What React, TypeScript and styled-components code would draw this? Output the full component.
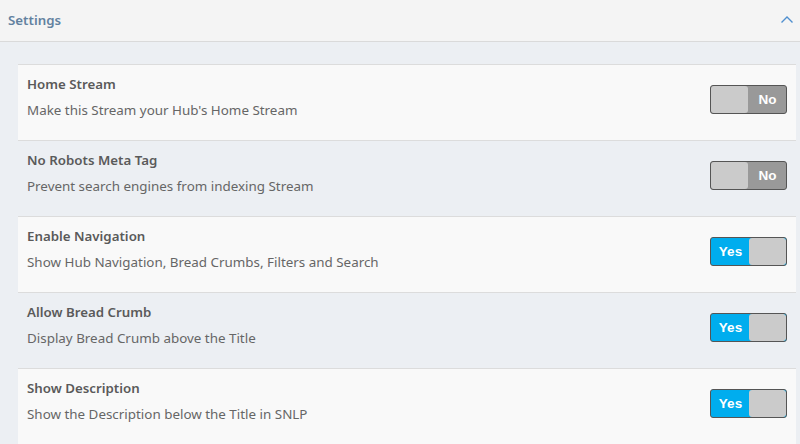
import React from "react";
import styled, { createGlobalStyle } from "styled-components";

const Global = createGlobalStyle`
  html, body { margin: 0; padding: 0; background: #eceff3; }
  body { font-family: "Noto Sans", "Open Sans", sans-serif; }
`;

const Panel = styled.div`
  width: 800px;
  height: 444px;
  overflow: hidden;
  background: #eceff3;
`;

const Header = styled.div`
  height: 42px;
  box-sizing: border-box;
  display: flex;
  align-items: center;
  justify-content: space-between;
  padding: 0 6px 1px 8px;
  background: #f4f4f4;
  border-bottom: 1px solid #dadada;
`;

const HeaderTitle = styled.span`
  font-size: 13.3px;
  font-weight: 600;
  color: #62819f;
`;

const Body = styled.div`
  padding: 22px 4px 0 18px;
`;

const List = styled.div`
  display: flex;
  flex-direction: column;
`;

const Row = styled.div<{ $alt: boolean }>`
  height: 76px;
  box-sizing: border-box;
  border-top: 1px solid #dcdcdc;
  background: ${(p) => (p.$alt ? "transparent" : "#f9f9f9")};
  display: flex;
  align-items: flex-start;
  justify-content: space-between;
  padding: 10px 9px 0 9px;
`;

const Texts = styled.div`
  display: flex;
  flex-direction: column;
  gap: 7px;
`;

const Title = styled.div`
  font-size: 13.3px;
  font-weight: 600;
  color: #5a5a5a;
  line-height: 19px;
`;

const Desc = styled.div`
  font-size: 13.4px;
  color: #666;
  line-height: 19px;
`;

const Toggle = styled.div<{ $on: boolean }>`
  margin-top: 10px;
  width: 77px;
  height: 29px;
  box-sizing: border-box;
  border: 1px solid #555;
  border-radius: 3px;
  overflow: hidden;
  display: flex;
  flex-direction: ${(p) => (p.$on ? "row" : "row-reverse")};
  background: ${(p) => (p.$on ? "#00adee" : "#999")};
`;

const Label = styled.span`
  flex: 1;
  display: flex;
  align-items: center;
  justify-content: center;
  padding-left: 1px;
  color: #fff;
  font-family: "Liberation Sans", Arial, sans-serif;
  font-weight: 700;
  font-size: 13.5px;
`;

const Knob = styled.span`
  width: 37px;
  background: #cbcbcb;
  border-radius: 3px;
`;

const items = [
  { title: "Home Stream", desc: "Make this Stream your Hub's Home Stream", on: false },
  { title: "No Robots Meta Tag", desc: "Prevent search engines from indexing Stream", on: false },
  { title: "Enable Navigation", desc: "Show Hub Navigation, Bread Crumbs, Filters and Search", on: true },
  { title: "Allow Bread Crumb", desc: "Display Bread Crumb above the Title", on: true },
  { title: "Show Description", desc: "Show the Description below the Title in SNLP", on: true },
];

export default function App() {
  return (
    <Panel>
      <Global />
      <Header>
        <HeaderTitle>Settings</HeaderTitle>
        <svg width="14" height="10" viewBox="0 0 14 10">
          <path d="M1.5 7.5 L7 2 L12.5 7.5" fill="none" stroke="#4f8fcf" strokeWidth="1.4" />
        </svg>
      </Header>
      <Body>
        <List>
          {items.map((it, i) => (
            <Row key={it.title} $alt={i % 2 === 1}>
              <Texts>
                <Title>{it.title}</Title>
                <Desc>{it.desc}</Desc>
              </Texts>
              <Toggle $on={it.on}>
                <Label>{it.on ? "Yes" : "No"}</Label>
                <Knob />
              </Toggle>
            </Row>
          ))}
        </List>
      </Body>
    </Panel>
  );
}
